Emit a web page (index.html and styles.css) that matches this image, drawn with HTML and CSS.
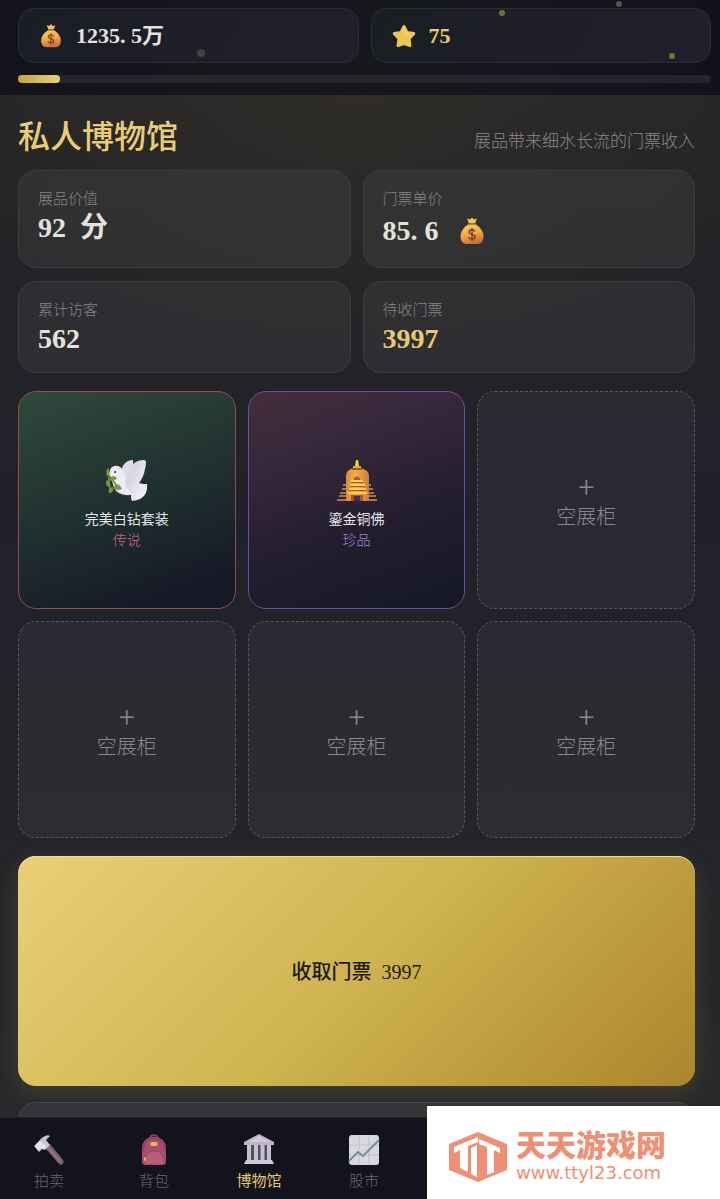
FILE: index.html
```html
<!DOCTYPE html>
<html lang="zh-CN">
<head>
    <meta charset="UTF-8">
    <meta name="viewport" content="width=device-width, initial-scale=1">
    <title>私人博物馆</title>
    <link rel="stylesheet" href="styles.css">
</head>
<body>

<!-- 公用图标 -->
<svg class="defs" width="0" height="0" aria-hidden="true">
    <defs>
        <linearGradient id="bagFill" x1="0" y1="0" x2="0.3" y2="1">
            <stop offset="0" stop-color="#ffd35c"/>
            <stop offset="0.6" stop-color="#f4a544"/>
            <stop offset="1" stop-color="#c9713f"/>
        </linearGradient>
        <symbol id="moneybag" viewBox="0 0 24 28">
            <path d="M7 1.500l3 .9L12 .4l2 2 3-.9-2 5H9z" fill="#f6c352"/>
            <path d="M9 7h6c4.500 2.500 8.500 7 8.500 12.500 0 4.500-2.500 7.500-6 7.500h-11C3 27 .5 24 .5 19.500.5 14 4.500 9.500 9 7z" fill="url(#bagFill)"/>
            <path d="M8.500 6.300h7v1.500h-7z" fill="#a96a35"/>
            <path d="M15 14.500c-.5-1.200-1.600-1.700-3-1.700-1.800 0-3 .9-3 2.300 0 3.200 6.200 1.400 6.200 4.700 0 1.400-1.300 2.300-3.200 2.300-1.700 0-2.900-.7-3.300-2M12 11v13" fill="none" stroke="#75472f" stroke-width="1.500"/>
        </symbol>
    </defs>
</svg>

<div class="app">
    <header class="topbar">
        <div class="wallet">
            <div class="chip">
                <svg class="chip-icon"><use href="#moneybag"/></svg>
                <span>1235<span class="dot">.</span>5万</span>
            </div>
            <div class="chip gold">
                <svg class="chip-icon" viewBox="0 0 24 24">
                    <path d="M12 2.500l3 6 6.800 1-4.800 5.200 1 6.800-6-2-6 2 1-6.800L2.200 9.500l6.800-1z" fill="#edc751" stroke="#edc751" stroke-width="3" stroke-linejoin="round"/>
                    <path d="M12 3l2.500 6 6 1-8 1z" fill="#f3d467"/>
                </svg>
                <span>75</span>
            </div>
        </div>
        <div class="progress"><div class="progress-fill"></div></div>
        <i class="spark spark-a"></i>
        <i class="spark spark-b"></i>
        <i class="spark spark-c"></i>
        <i class="spark spark-d"></i>
    </header>

    <main class="museum">
        <div class="title-row">
            <h1>私人博物馆</h1>
            <p>展品带来细水长流的门票收入</p>
        </div>

        <section class="stats">
            <div class="stat">
                <div class="label">展品价值</div>
                <div class="value"><span>92</span><span>分</span></div>
            </div>
            <div class="stat">
                <div class="label">门票单价</div>
                <div class="value tall"><span>85<span class="dot">.</span>6</span><svg class="value-icon"><use href="#moneybag"/></svg></div>
            </div>
            <div class="stat">
                <div class="label">累计访客</div>
                <div class="value">562</div>
            </div>
            <div class="stat">
                <div class="label">待收门票</div>
                <div class="value gold">3997</div>
            </div>
        </section>

        <section class="slots">
            <button class="slot legend">
                <svg class="exhibit" viewBox="0 0 42 42">
                    <defs>
                        <linearGradient id="doveWing" x1="0" y1="0" x2="1" y2="0.5">
                            <stop offset="0" stop-color="#f4f2f8"/>
                            <stop offset="0.6" stop-color="#d9d4e3"/>
                            <stop offset="1" stop-color="#efecf5"/>
                        </linearGradient>
                    </defs>
                    <path d="M15 13C16 6 20 1 27 1l1 13-10 6z" fill="#dedae8"/>
                    <path d="M19 16C24 7 29 1 38 1c3 0 2 5 1 9-1 6-3 10-6 14 3 1 5 1 8 1 1 9-3 16-15 17-1-2-1-4-1-6C15 37 8 33 7 25L4 17C2 10 7 6 11 7c5 1 6 5 8 9z" fill="url(#doveWing)"/>
                    <path d="M5 12c2-6 9-7 12 0l3 7c-2 6 1 12 7 16-9 1-18-2-20-11z" fill="#eeebf5"/>
                    <path d="M4.500 12.500L0 15.500l4.500 1.500z" fill="#efc23b"/>
                    <circle cx="9" cy="13" r="1" fill="#2b2935"/>
                    <path d="M1.500 11c1 8 2 14 3 23M2 19c4 1 6 3 8 7" fill="none" stroke="#6a8a3b" stroke-width="1.500"/>
                    <path d="M3 21c1-4 5-5 8-2-2 3-5 4-8 2zM4 28c-4 0-5-4-3-7 3 1 4 4 3 7zM8 27c2-3 6-2 8 3-4 2-8 1-8-3zM3 34c-1-4 1-6 4-6 1 4-1 6-4 6zM1 16c-1-3-1-5 1-7 2 3 1 5-1 7z" fill="#789746"/>
                </svg>
                <span class="name">完美白钻套装</span>
                <span class="rarity">传说</span>
            </button>
            <button class="slot treasure">
                <svg class="exhibit" viewBox="0 0 42 42">
                    <defs>
                        <linearGradient id="stupa" x1="0" y1="0" x2="1" y2="0">
                            <stop offset="0" stop-color="#d98a37"/>
                            <stop offset="0.4" stop-color="#f2b045"/>
                            <stop offset="1" stop-color="#cf7b3d"/>
                        </linearGradient>
                    </defs>
                    <path d="M7 25h28v2H7zM6 29h31v2H6zM4 33h34v2H4zM3 36h37v2H3zM1 40h40v2H1z" fill="#a5754c"/>
                    <path d="M20 1h2l1 6h-4z" fill="#f5d548"/>
                    <path d="M17 7h8v2h-8z" fill="#e3ab36"/>
                    <path d="M10 42V17c0-5 4-8 11-8s12 3 12 8v25z" fill="url(#stupa)"/>
                    <path d="M16 9h10v2H16z" fill="#a3532e"/>
                    <path d="M15 21h12v2H15zM14 25h15v2H14zM13 29h17v2H13zM12 33h19v2H12z" fill="#ffd34e"/>
                    <path d="M18 19c2-2 4-2 6 0v2h-6zM15 23h12v1H15zM14 27h15v1H14zM13 31h17v1H13z" fill="#a55c31"/>
                    <path d="M15 42v-6h12v6z" fill="#a9532f"/>
                    <path d="M18 42v-5h6v5z" fill="#40305f"/>
                </svg>
                <span class="name">鎏金铜佛</span>
                <span class="rarity">珍品</span>
            </button>
            <button class="slot"><span class="plus">+</span><span>空展柜</span></button>
            <button class="slot"><span class="plus">+</span><span>空展柜</span></button>
            <button class="slot"><span class="plus">+</span><span>空展柜</span></button>
            <button class="slot"><span class="plus">+</span><span>空展柜</span></button>
        </section>

        <button class="collect">收取门票&nbsp; 3997</button>

        <section class="panel"></section>
    </main>

    <nav class="tabs">
        <a class="tab" href="#auction">
            <svg viewBox="0 0 32 32">
                <path d="M12 14l5-4 13 16c2 3-1 6-4 4z" fill="#775f68"/>
                <path d="M14 14l2-1 12 14-1 2z" fill="#927780"/>
                <path d="M1 12l5-5C9 3 14 0 17 2l-4 4 4 5-5 5-3-1-3 3z" fill="#c5c7cf"/>
                <path d="M2 12l5-5 6 5-2 3-3-1-2 3z" fill="#e3e4e9"/>
            </svg>
            <span>拍卖</span>
        </a>
        <a class="tab" href="#bag">
            <svg viewBox="0 0 32 32">
                <path d="M12 5c0-5 8-5 8 0" fill="none" stroke="#884059" stroke-width="2"/>
                <path d="M4 15C4 7 9 3 16 3s12 4 12 12v13c0 2-1 3-3 3H7c-2 0-3-1-3-3z" fill="#a64e6c"/>
                <path d="M7 30V22c0-9 18-9 18 0v8z" fill="#b75d77"/>
                <path d="M5 18C6 7 10 5 16 5s10 2 11 13M7 24c1-10 17-10 18 0" fill="none" stroke="#843d58" stroke-width="1"/>
                <rect x="12.500" y="8" width="7" height="4" rx="1" fill="#e6b264"/>
                <rect x="6" y="23" width="2" height="4" rx="1" fill="#e6b264"/>
            </svg>
            <span>背包</span>
        </a>
        <a class="tab active" href="#museum" aria-current="page">
            <svg viewBox="0 0 32 32">
                <path d="M16 0L31 8v3H1V8z" fill="#bbb5c7"/>
                <path d="M16 2l11 6H5z" fill="#d0cad9"/>
                <path d="M4 11h24v16H4z" fill="#554f65"/>
                <path d="M4 11h4v16H4zM11 11h4v16h-4zM17.500 11h4v16h-4zM24 11h4v16h-4z" fill="#c7c0d1"/>
                <path d="M3 26h26l2 4H1z" fill="#cfc9d8"/>
            </svg>
            <span>博物馆</span>
        </a>
        <a class="tab" href="#stock">
            <svg viewBox="0 0 32 32">
                <rect x="1" y="1" width="30" height="30" rx="3" fill="#d8d8de"/>
                <path d="M11 1v30M21 1v30M1 11h30M1 21h30" stroke="#c0c0ca"/>
                <path d="M1 27l9-9 5 4 16-16" fill="none" stroke="#718e9e" stroke-width="2"/>
            </svg>
            <span>股市</span>
        </a>
    </nav>

    <a class="sitemark" href="#site">
        <svg viewBox="0 0 58 50">
            <path d="M29 0l29 12v26L29 50 0 38V12z" fill="#ee9073"/>
            <path d="M5 15L29 5v5l-10 4v26l-8-4V18l-6 3z" fill="#fff"/>
            <path d="M30 7l21 9v5l-6-3v22l-7 3V15l-8-3z" fill="#fff"/>
            <path d="M22 16l6-3v32l-6-3z" fill="#fff"/>
        </svg>
        <span class="sitemark-text">
            <strong>天天游戏网</strong>
            <span>www.ttyl23.com</span>
        </span>
    </a>
</div>

</body>
</html>
```
FILE: styles.css
```css
* {
    box-sizing: border-box;
}
body {
    margin: 0;
    background: #15151d;
    color: #e4e2dc;
    font-family: "Liberation Serif", "Noto Sans CJK SC", serif;
}
button {
    font-family: inherit;
    color: inherit;
    cursor: pointer;
}
a {
    text-decoration: none;
}
.defs {
    position: absolute;
}
.app {
    display: flex;
    flex-direction: column;
    height: 100vh;
    overflow: hidden;
}
.gold {
    color: #e6cb72;
}
/* 等宽小数点 */
.dot {
    display: inline-block;
    width: 0.5em;
}

/* 顶栏 */
.topbar {
    position: relative;
    padding: 8px 9px 12px 18px;
    background: linear-gradient(90deg, #13131c, #17181d 50%, #12121e);
}
.wallet {
    display: grid;
    grid-template-columns: 1fr 1fr;
    gap: 12px;
}
.chip {
    display: flex;
    align-items: center;
    gap: 13px;
    height: 55px;
    padding: 0 20px;
    border: 1px solid #2c2d36;
    border-radius: 16px;
    background: linear-gradient(120deg, #1b1d24, #20202c);
    font-size: 22px;
    line-height: 26px;
    font-weight: 600;
}
.chip-icon {
    width: 24px;
    height: 24px;
}
.progress {
    height: 8px;
    margin-top: 12px;
    border-radius: 4px;
    background: #25262d;
}
.progress-fill {
    width: 6%;
    height: 100%;
    border-radius: 4px;
    background: linear-gradient(90deg, #c3a446, #ead071);
}
.spark {
    position: absolute;
    width: 6px;
    height: 6px;
    border-radius: 50%;
    background: #77713f;
}
.spark-a {
    left: 197px;
    top: 49px;
    width: 8px;
    height: 8px;
    background: #45443b;
}
.spark-b {
    right: 215px;
    top: 10px;
}
.spark-c {
    right: 98px;
    top: 1px;
    background: #55544a;
}
.spark-d {
    right: 45px;
    top: 53px;
}

/* 博物馆 */
.museum {
    flex: 1;
    min-height: 0;
    overflow: hidden;
    padding: 18px 25px 0 18px;
    background:
        radial-gradient(ellipse 60% 26% at 50% 0, rgba(80, 68, 42, 0.22), transparent),
        linear-gradient(180deg, #262628, #232327 20%, #21212c 40%, #232329 65%, #27292b);
}
.title-row {
    display: flex;
    align-items: center;
    justify-content: space-between;
    height: 48px;
    margin-bottom: 9px;
}
.title-row h1 {
    margin: 0;
    color: #e8cd75;
    font-size: 32px;
    line-height: 48px;
    font-weight: 500;
}
.title-row p {
    margin: 4px 0 0;
    color: #89878b;
    font-size: 17px;
    font-weight: 300;
}
.stats {
    display: grid;
    grid-template-columns: 1fr 1fr;
    gap: 13px 12px;
}
.stat {
    padding: 17px 19px 16px;
    border: 1px solid #3e3e40;
    border-radius: 18px;
    background: rgba(255, 255, 255, 0.05);
}
.label {
    color: #858388;
    font-size: 15px;
    line-height: 22px;
    font-weight: 300;
}
.value {
    display: flex;
    align-items: center;
    gap: 14px;
    height: 35px;
    font-size: 28px;
    line-height: 35px;
    font-weight: 600;
}
.value.tall {
    height: 41px;
    gap: 20px;
}
.value-icon {
    width: 26px;
    height: 28px;
}
.slots {
    display: grid;
    grid-template-columns: repeat(3, 1fr);
    gap: 12px;
    margin-top: 18px;
}
.slot {
    display: flex;
    flex-direction: column;
    align-items: center;
    justify-content: center;
    aspect-ratio: 1;
    padding: 3px 0 0;
    border: 1px dashed #56565e;
    border-radius: 18px;
    background: rgba(255, 255, 255, 0.04);
    color: #8a8991;
    font-size: 20px;
    line-height: 32px;
    font-weight: 300;
}
.plus {
    font-family: "Noto Sans CJK SC", sans-serif;
    font-size: 30px;
    line-height: 32px;
}
.slot.legend,
.slot.treasure {
    padding-top: 10px;
}
.slot.legend {
    border: 1px solid #914f4c;
    background: linear-gradient(160deg, #2f493c, #20302f 50%, #151826 90%);
}
.slot.treasure {
    border: 1px solid #6b4f9c;
    background: linear-gradient(160deg, #442d37, #38283d 25%, #231e2d 60%, #151826);
}
.exhibit {
    width: 42px;
    height: 42px;
    margin-bottom: 8px;
}
.name {
    color: #e6e5e7;
    font-size: 14px;
    line-height: 21px;
    font-weight: 400;
}
.rarity {
    font-size: 14px;
    line-height: 21px;
}
.legend .rarity {
    color: #cd6c7a;
}
.treasure .rarity {
    color: #a084dc;
}
.collect {
    display: block;
    width: 100%;
    height: 230px;
    margin-top: 18px;
    padding-bottom: 2px;
    border: 0;
    border-radius: 18px;
    background: linear-gradient(135deg, #ebcf78, #cfb450 50%, #ac852c);
    box-shadow: 0 6px 24px rgba(205, 175, 70, 0.18), inset 0 1px 0 #f0dc98;
    color: #1d1a12;
    font-size: 20px;
    font-weight: 500;
}
.panel {
    height: 120px;
    margin-top: 16px;
    border: 1px solid #48484a;
    border-radius: 18px;
    background: #353537;
}

/* 底部导航 */
.tabs {
    display: flex;
    gap: 13px;
    height: 82px;
    padding: 16px 3px 0;
    border-top: 1px solid #25262c;
    background: #12131d;
}
.tab {
    display: flex;
    flex-direction: column;
    align-items: center;
    gap: 4px;
    width: 92px;
    color: #686771;
    font-size: 15px;
    line-height: 22px;
    font-weight: 300;
}
.tab svg {
    width: 32px;
    height: 32px;
}
.tab.active {
    color: #e3c870;
    font-weight: 400;
}

/* 站点标识 */
.sitemark {
    position: fixed;
    right: 0;
    bottom: 0;
    display: flex;
    align-items: center;
    gap: 9px;
    width: 293px;
    height: 93px;
    padding: 8px 22px 0;
    background: #fff;
    color: #ee9073;
}
.sitemark svg {
    width: 58px;
    height: 50px;
}
.sitemark-text {
    display: flex;
    flex-direction: column;
    font-family: "DejaVu Sans", "Noto Sans CJK SC", sans-serif;
    font-size: 18px;
    line-height: 22px;
}
.sitemark-text strong {
    font-size: 30px;
    line-height: 32px;
    font-weight: 900;
}
```
